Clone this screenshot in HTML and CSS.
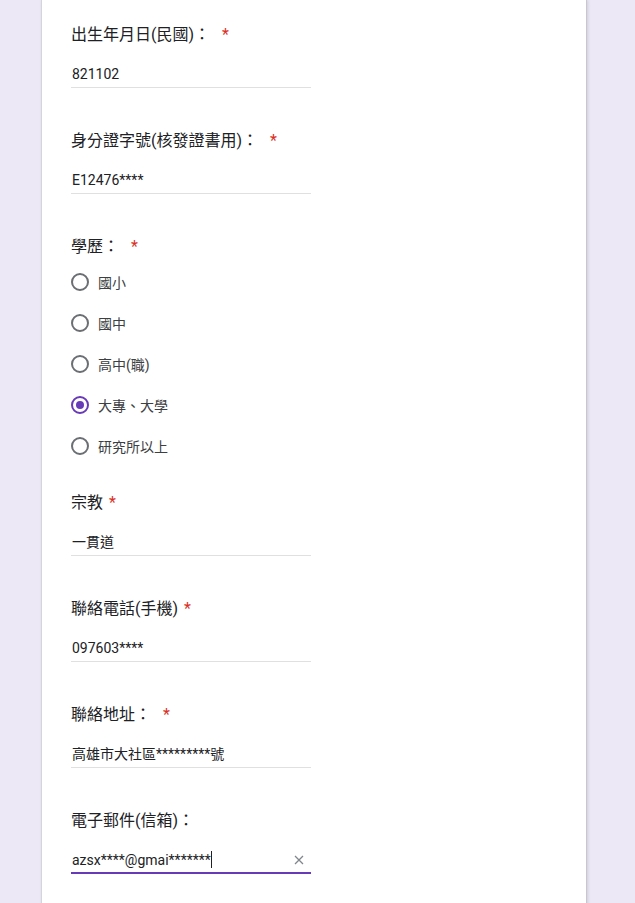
FILE: index.html
```html
<!DOCTYPE html>
<html lang="zh-Hant">
<head>
    <meta charset="UTF-8">
    <meta name="viewport" content="width=device-width, initial-scale=1.0">
    <title>報名表</title>
    <link rel="stylesheet" href="styles.css">
</head>
<body>
    <div class="card">
        <!-- 出生年月日 -->
        <div class="question">
            <div class="q-title">出生年月日(民國)： <span class="req wide">*</span></div>
            <div class="text-input"><span class="value">821102</span></div>
        </div>

        <div class="question">
            <div class="q-title">身分證字號(核發證書用)： <span class="req wide">*</span></div>
            <div class="text-input"><span class="value">E12476****</span></div>
        </div>

        <!-- 學歷 -->
        <div class="question">
            <div class="q-title">學歷： <span class="req wide">*</span></div>
            <div class="options">
                <label class="option"><span class="radio"></span>國小</label>
                <label class="option"><span class="radio"></span>國中</label>
                <label class="option"><span class="radio"></span>高中(職)</label>
                <label class="option"><span class="radio checked"></span>大專、大學</label>
                <label class="option"><span class="radio"></span>研究所以上</label>
            </div>
        </div>

        <div class="question">
            <div class="q-title">宗教 <span class="req">*</span></div>
            <div class="text-input"><span class="value">一貫道</span></div>
        </div>

        <div class="question">
            <div class="q-title">聯絡電話(手機) <span class="req">*</span></div>
            <div class="text-input"><span class="value">097603****</span></div>
        </div>

        <div class="question">
            <div class="q-title">聯絡地址： <span class="req wide">*</span></div>
            <div class="text-input"><span class="value">高雄市大社區*********號</span></div>
        </div>

        <div class="question">
            <div class="q-title">電子郵件(信箱)：</div>
            <div class="text-input focused">
                <span class="value">azsx****@gmai*******<span class="caret"></span></span>
                <svg class="clear" width="10" height="10" viewBox="0 0 10 10">
                    <path d="M1 1 L9 9 M9 1 L1 9" stroke="#80868b" stroke-width="1.3" fill="none"/>
                </svg>
            </div>
        </div>
    </div>
</body>
</html>
```

FILE: styles.css
```css
body {
    margin: 0;
    padding: 0;
    background: #ece8f6;
    font-family: Roboto, "Noto Sans CJK TC", sans-serif;
    color: #202124;
    height: 903px;
    overflow: hidden;
}

.card {
    margin-left: 41px;
    width: 546px;
    min-height: 960px;
    background: white;
    border-left: 1px solid #d5d3dc;
    border-right: 1px solid #c8c6cf;
    box-shadow: 1px 0 3px rgba(0, 0, 0, 0.12);
    padding: 23px 0 0 29px;
    box-sizing: border-box;
}

.question {
    padding-bottom: 33px;
}

.q-title {
    font-size: 16px;
    line-height: 24px;
    letter-spacing: 0;
}

.req {
    color: #d93025;
    margin-left: 2px;
}

.req.wide {
    margin-left: 8px;
}

.text-input {
    width: 240px;
    margin-top: 17px;
    margin-bottom: 8px;
    padding-bottom: 3px;
    border-bottom: 1px solid #e0e0e0;
    display: flex;
    align-items: center;
    justify-content: space-between;
}

.value {
    font-size: 14px;
    line-height: 20px;
    padding-left: 1px;
}

.text-input.focused {
    padding-bottom: 2px;
    border-bottom: 2px solid #673ab7;
}

.caret {
    display: inline-block;
    width: 1px;
    height: 17px;
    background: #202124;
    vertical-align: -3px;
}

.clear {
    margin-right: 7px;
}

.options {
    margin-top: 11px;
    display: flex;
    flex-direction: column;
    gap: 17px;
}

.option {
    display: flex;
    align-items: center;
    height: 24px;
    font-size: 14px;
    color: #3c4043;
}

.radio {
    width: 18px;
    height: 18px;
    border: 2px solid #6b6e72;
    border-radius: 50%;
    box-sizing: border-box;
    margin-right: 9px;
    position: relative;
}

.radio.checked {
    border-color: #673ab7;
}

.radio.checked::after {
    content: "";
    position: absolute;
    left: 3px;
    top: 3px;
    width: 8px;
    height: 8px;
    border-radius: 50%;
    background: #673ab7;
}
```
